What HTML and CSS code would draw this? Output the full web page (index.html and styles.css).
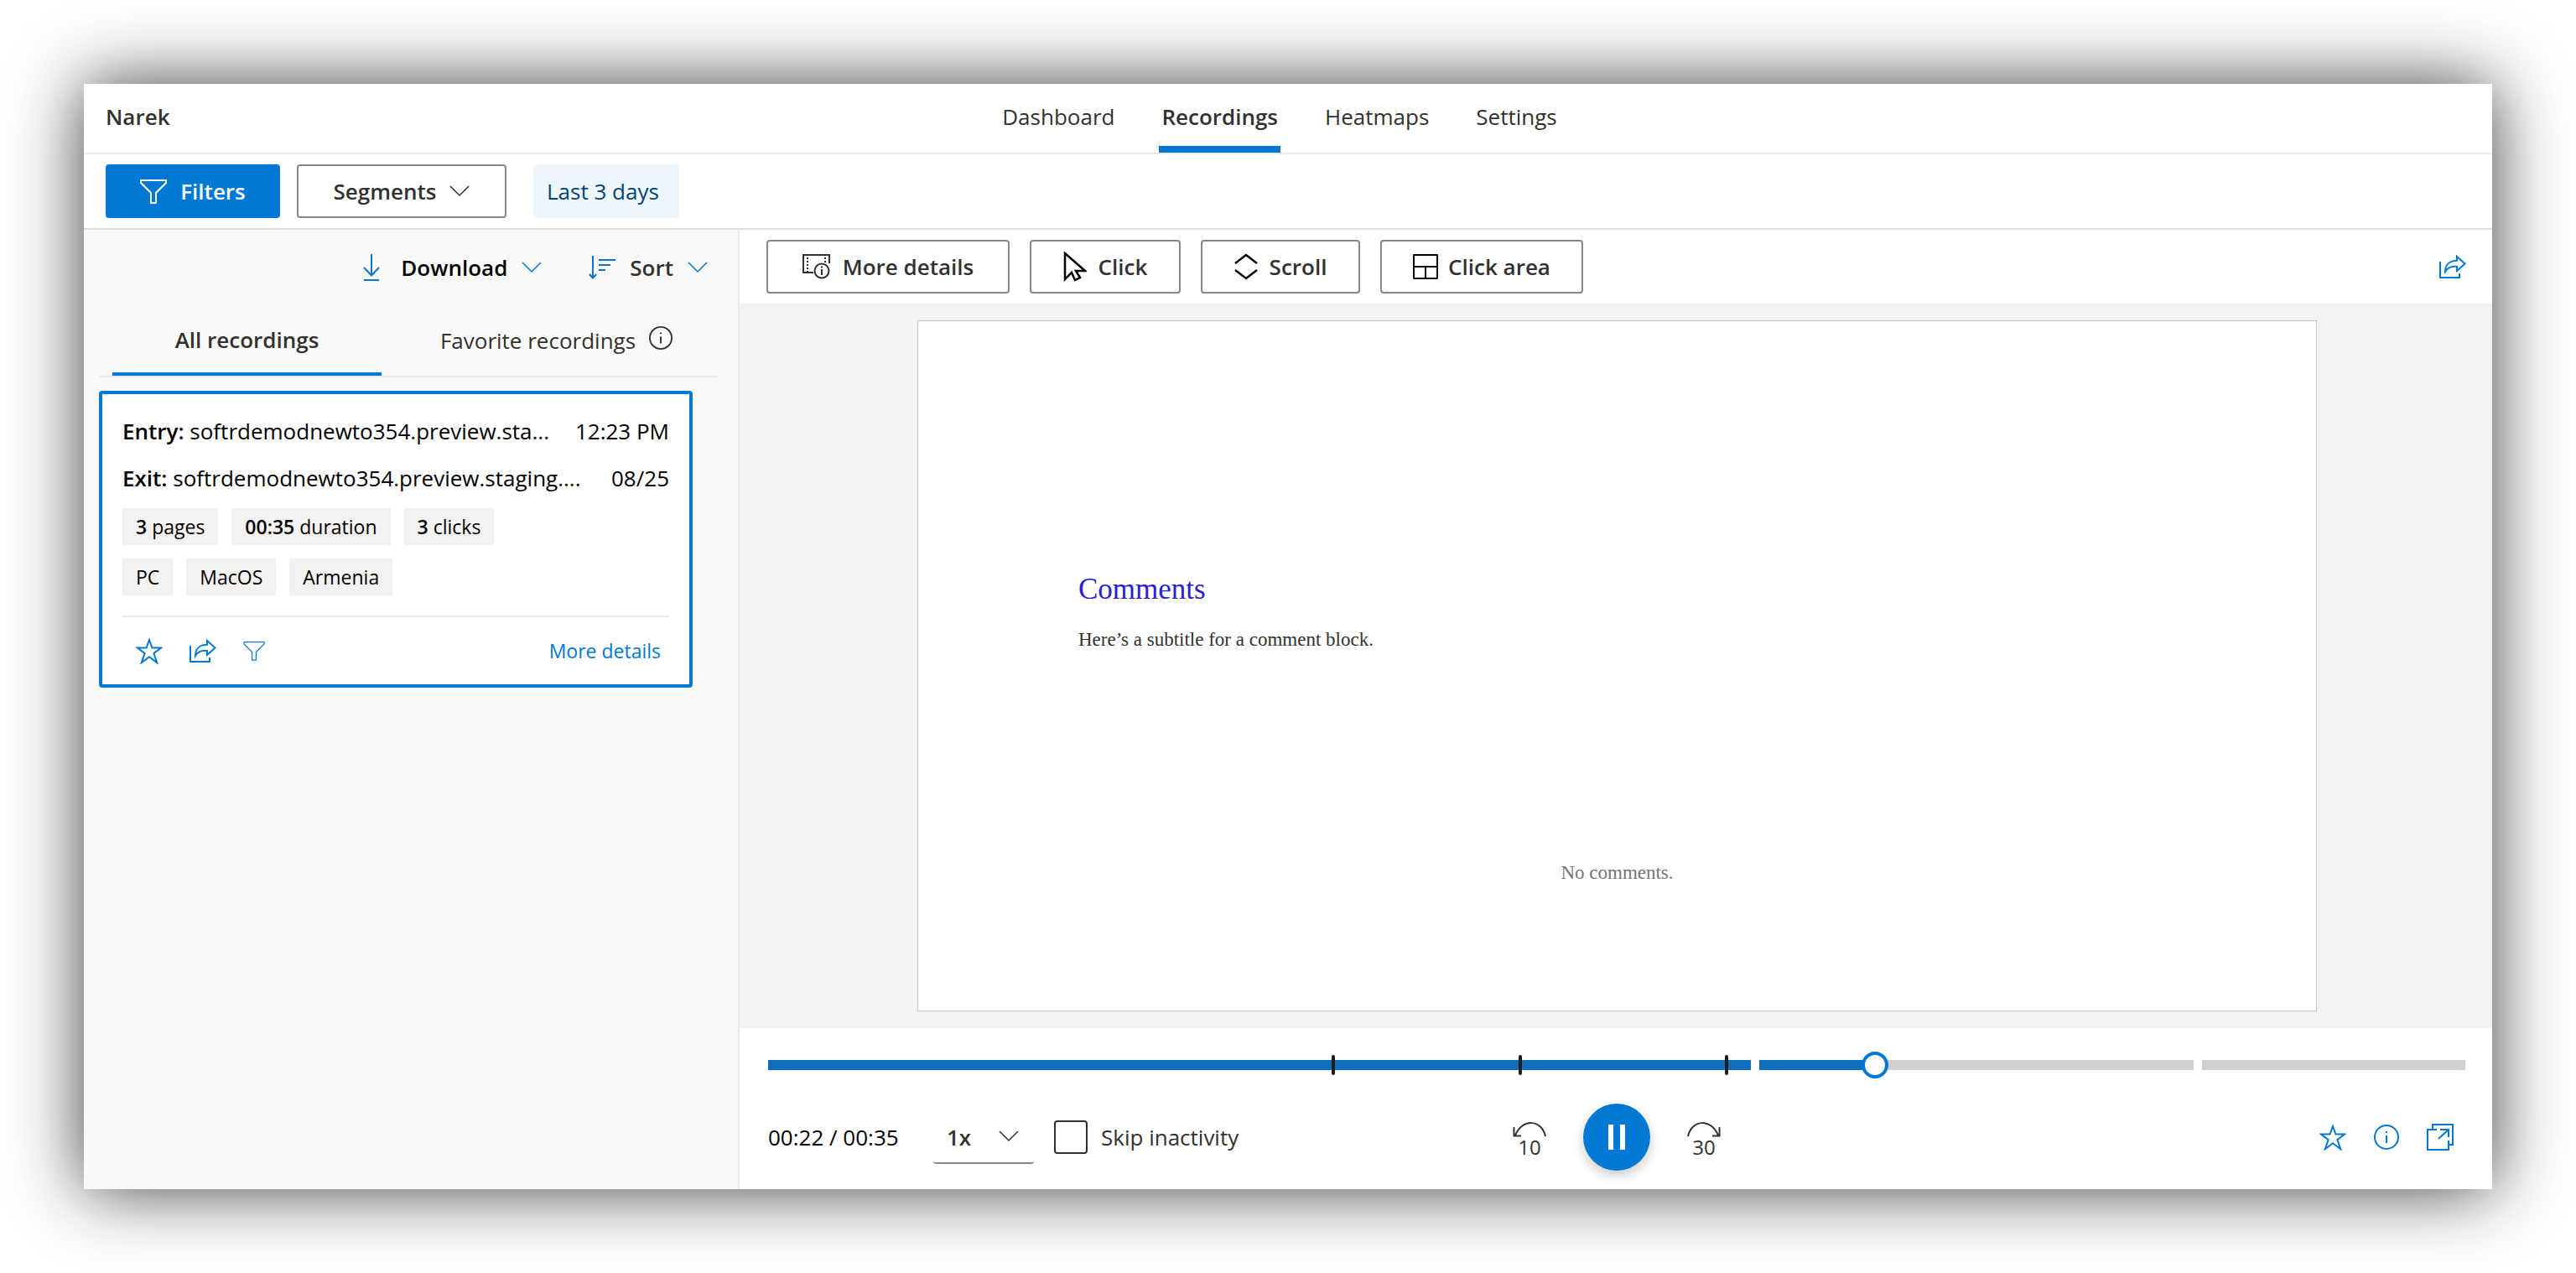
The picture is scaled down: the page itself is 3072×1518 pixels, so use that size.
FILE: index.html
```html
<!DOCTYPE html>
<html lang="en">
<head>
<meta charset="utf-8">
<title>Recordings</title>
<link rel="stylesheet" href="styles.css">
</head>
<body>
<svg class="defs" aria-hidden="true">
  <symbol id="chevron" viewBox="0 0 24 14"><path d="M1 1l11 11L23 1"/></symbol>
  <symbol id="funnel" viewBox="0 0 32 30"><path d="M1 2h30v3L19 17v12h-6V17L1 5z"/></symbol>
  <symbol id="star" viewBox="0 0 32 32"><path d="M16 3l3.400 9.600H30l-8.600 6.600 3.800 11-9.200-7-9.200 7 3.800-11L2 12.600h10.600z"/></symbol>
  <symbol id="share" viewBox="0 0 32 28"><path d="M1 8v19h23v-5M21 2l9.500 8.500L21 19v-5c-6-.8-11 1-14 6 0-8 5-13.200 14-13.200z"/></symbol>
  <symbol id="info" viewBox="0 0 30 30"><circle cx="15" cy="15" r="14"/><path d="M15 13v9M15 8v2"/></symbol>
</svg>
<div class="app">
  <header class="header">
    <div class="brand">Narek</div>
    <nav class="nav">
      <a href="#dashboard">Dashboard</a>
      <a href="#recordings" class="active" aria-current="page">Recordings</a>
      <a href="#heatmaps">Heatmaps</a>
      <a href="#settings">Settings</a>
    </nav>
  </header>

  <div class="filterbar">
    <button class="btn primary"><svg class="i-funnel"><use href="#funnel"/></svg>Filters</button>
    <button class="btn segments">Segments<svg class="i-chevron"><use href="#chevron"/></svg></button>
    <button class="btn range">Last 3 days</button>
  </div>

  <main class="main">
    <aside class="sidebar">
      <div class="side-tools">
        <button class="tool download"><svg class="i-download" viewBox="0 0 20 32"><path d="M10 0v25M1 16l9 9.500 9-9.500M1 31h18"/></svg>Download<svg class="i-chevron"><use href="#chevron"/></svg></button>
        <button class="tool"><svg class="i-sort" viewBox="0 0 32 28"><path d="M5 0v26M1 22l4 4.500L9 22M12 5h20M12 11h14M12 17h8"/></svg>Sort<svg class="i-chevron"><use href="#chevron"/></svg></button>
      </div>
      <div class="tabs" role="tablist">
        <button class="tab selected" role="tab" aria-selected="true">All recordings</button>
        <button class="tab" role="tab" aria-selected="false">Favorite recordings<svg class="i-info-small" viewBox="0 0 30 30"><use href="#info"/></svg></button>
      </div>
      <article class="card">
        <div class="visit"><span class="url"><b>Entry:</b> softrdemodnewto354.preview.sta...</span><time>12:23 PM</time></div>
        <div class="visit"><span class="url"><b>Exit:</b> softrdemodnewto354.preview.staging....</span><time>08/25</time></div>
        <ul class="chips">
          <li><b>3</b> pages</li>
          <li><b>00:35</b> duration</li>
          <li><b>3</b> clicks</li>
        </ul>
        <ul class="chips">
          <li>PC</li>
          <li>MacOS</li>
          <li>Armenia</li>
        </ul>
        <div class="card-foot">
          <button class="icon" aria-label="Add to favorites"><svg class="i-star"><use href="#star"/></svg></button>
          <button class="icon" aria-label="Share"><svg class="i-share"><use href="#share"/></svg></button>
          <button class="icon" aria-label="Filter"><svg class="i-funnel-small"><use href="#funnel"/></svg></button>
          <a href="#details">More details</a>
        </div>
      </article>
    </aside>

    <section class="viewer">
      <div class="toolbar">
        <button class="btn w-details"><svg class="i-details" viewBox="0 0 34 30"><path d="M13 22H1V1h31v10"/><path class="film" d="M6 4v17M27 4v6"/><circle cx="23" cy="20" r="8.500"/><path d="M23 18v7M23 14.500v2"/></svg>More details</button>
        <button class="btn w-click"><svg class="i-cursor" viewBox="0 0 28 36"><path d="M2 2v31l8-8 4 9 6-3-5-8h11z"/></svg>Click</button>
        <button class="btn w-scroll"><svg class="i-scroll" viewBox="0 0 28 32"><path d="M1 12L14 2l13 10M1 20l13 10 13-10"/></svg>Scroll</button>
        <button class="btn w-area"><svg class="i-area" viewBox="0 0 30 30"><path d="M1 1h28v28H1zM1 15h28M15 15v14"/></svg>Click area</button>
        <button class="icon toolbar-share" aria-label="Share"><svg class="i-share"><use href="#share"/></svg></button>
      </div>

      <div class="stage">
        <div class="page">
          <h1>Comments</h1>
          <p>Here’s a subtitle for a comment block.</p>
          <p class="empty">No comments.</p>
        </div>
      </div>

      <div class="player">
        <div class="timeline">
          <div class="seg played" style="flex-grow:1172">
            <i class="tick" style="left:57.500%"></i>
            <i class="tick" style="left:76.500%"></i>
            <i class="tick" style="left:97.500%"></i>
          </div>
          <div class="seg" style="flex-grow:518">
            <div class="fill" style="width:26.600%"></div>
            <i class="knob" style="left:26.600%"></i>
          </div>
          <div class="seg" style="flex-grow:314"></div>
        </div>
        <div class="controls">
          <div class="left">
            <span class="time">00:22 / 00:35</span>
            <div class="speed">
              <select aria-label="Playback speed"><option>1x</option></select>
              <svg class="i-chevron"><use href="#chevron"/></svg>
            </div>
            <label class="skip"><input type="checkbox">Skip inactivity</label>
          </div>
          <div class="center">
            <button class="jump" aria-label="Back 10 seconds"><svg viewBox="0 0 40 18"><path d="M39 17C35-3 11-5 3 16M1.500 6v10.500H10"/></svg><span>10</span></button>
            <button class="pause" aria-label="Pause"><svg viewBox="0 0 20 32"><path d="M0 1h6v30H0zM14 1h6v30h-6z"/></svg></button>
            <button class="jump" aria-label="Forward 30 seconds"><svg viewBox="0 0 40 18"><path d="M1 17C5-3 29-5 37 16M38.500 6v10.500H30"/></svg><span>30</span></button>
          </div>
          <div class="right">
            <button class="icon" aria-label="Add to favorites"><svg class="i-star"><use href="#star"/></svg></button>
            <button class="icon" aria-label="Information"><svg class="i-info"><use href="#info"/></svg></button>
            <button class="icon" aria-label="Open in new window"><svg class="i-popout" viewBox="0 0 32 32"><path d="M12 7H1v24h25V20M7 7V1h24v24h-5M16 7h10v9M26 7L14 18"/></svg></button>
          </div>
        </div>
      </div>
    </section>
  </main>
</div>
</body>
</html>
```
FILE: styles.css
```css
* { box-sizing: border-box; }
body {
  margin: 0;
  min-height: 100vh;
  padding: 100px;
  display: flex;
  background: #fff;
  color: #323130;
  font: 26px/36px "Open Sans", "Noto Sans", sans-serif;
}
button, select, input { font: inherit; color: inherit; margin: 0; }
button { background: none; border: 0; padding: 0; cursor: pointer; }
a { color: inherit; text-decoration: none; }
ul, h1, p { margin: 0; padding: 0; list-style: none; font-weight: 400; }
b { font-weight: 600; }
svg { fill: none; stroke: currentColor; stroke-width: 2; flex: none; display: block; }
.defs { position: absolute; width: 0; height: 0; }

.app {
  flex: 1;
  display: flex;
  flex-direction: column;
  background: #fff;
  box-shadow: 0 0 80px rgba(0, 0, 0, .76);
}

.header {
  display: grid;
  grid-template-columns: 1fr auto 1fr;
  height: 84px;
  padding: 0 26px;
  border-bottom: 2px solid #edebe9;
}
.brand { font-weight: 600; line-height: 78px; }
.nav { display: flex; gap: 50px; margin-right: 20px; }
.nav a { padding: 0 3px; line-height: 78px; border-bottom: 8px solid transparent; height: 82px; }
.nav .active { font-weight: 600; border-color: #0078d4; }

.filterbar {
  display: flex;
  align-items: center;
  gap: 20px;
  height: 90px;
  padding: 0 26px;
  border-bottom: 2px solid #dedede;
}
.btn {
  display: flex;
  align-items: center;
  justify-content: center;
  height: 64px;
  border: 2px solid #8a8886;
  border-radius: 4px;
  font-weight: 600;
  white-space: nowrap;
}
.primary { width: 208px; gap: 16px; background: #0078d4; border-color: #0078d4; color: #fff; }
.segments { width: 250px; gap: 16px; }
.range { margin-left: 12px; padding: 0 24px 0 16px; background: #eff6fc; border: 0; color: #004578; font-weight: 400; }

.i-funnel { width: 32px; height: 30px; }
.i-funnel-small { width: 26px; height: 24px; stroke-width: 1.5px; }
.i-chevron { width: 24px; height: 14px; stroke-width: 1.5px; }
.i-download { width: 20px; height: 32px; }
.i-sort { width: 32px; height: 28px; }
.i-info-small { width: 28px; height: 28px; margin-bottom: 6px; }
.i-info { width: 32px; height: 30px; }
.i-star, .i-popout { width: 32px; height: 32px; }
.i-share { width: 32px; height: 28px; }
.i-details { width: 34px; height: 30px; }
.film { stroke-dasharray: 2 2; }
.i-cursor { width: 28px; height: 36px; stroke-width: 2.5px; }
.i-scroll { width: 28px; height: 32px; stroke-width: 2.5px; }
.i-area { width: 30px; height: 30px; stroke-linejoin: round; }
.i-cursor, .i-scroll, .i-area { stroke: #000; }

.main { flex: 1; display: grid; grid-template-columns: 782px minmax(0, 1fr); }

.sidebar { background: #faf9f8; border-right: 2px solid #edebe9; padding: 0 24px 0 18px; }
.side-tools { display: flex; justify-content: flex-end; gap: 56px; height: 90px; padding-right: 12px; }
.tool { display: flex; align-items: center; gap: 17px; font-weight: 600; }
.tool svg { stroke: #0078d4; }
.download { color: #000; }
.download .i-download { margin-right: 8px; }
.tabs { display: flex; gap: 24px; height: 86px; padding: 0 16px; border-bottom: 2px solid #edebe9; }
.tab { display: flex; align-items: center; justify-content: center; gap: 16px; flex: none; height: 84px; border-bottom: 4px solid transparent; border-top: 2px solid transparent; }
.tab.selected { width: 321px; font-weight: 600; border-bottom-color: #0078d4; }
.tab:last-child { flex: 1; padding: 2px 0 0 8px; }

.card {
  margin: 16px 30px 0 0;
  padding: 16px 24px 0;
  height: 354px;
  background: #fff;
  border: 4px solid #0078d4;
  border-radius: 4px;
  color: #000;
}
.visit { display: flex; justify-content: space-between; line-height: 56px; white-space: nowrap; }
.chips { display: flex; gap: 16px; margin: 8px 0 16px; font-size: 23px; line-height: 44px; }
.chips li { padding: 0 16px; background: #f3f2f1; }
.card-foot { display: flex; align-items: center; gap: 32px; margin-top: 24px; padding: 0 10px 2px 16px; height: 84px; border-top: 2px solid #edebe9; color: #0078d4; }
.card-foot a { margin-left: auto; font-size: 23px; }
.icon { color: #0078d4; }

.viewer { display: flex; flex-direction: column; }
.toolbar { display: flex; align-items: center; gap: 24px; height: 88px; padding: 0 31px 0 32px; }
.toolbar .btn { gap: 14px; }
.toolbar .w-area { gap: 12px; }
.w-details { width: 290px; }
.w-click { width: 180px; }
.w-scroll { width: 190px; }
.w-area { width: 242px; }
.toolbar-share { margin-left: auto; }
.stage { flex: 1; display: flex; padding: 20px 209px 20px 212px; background: #f3f2f1; }
.page { flex: 1; padding: 300px 191px 0; background: #fff; border: 1px solid #c8c6c4; color: #323130; font-family: "Liberation Serif", serif; font-size: 23px; }
.page h1 { margin-bottom: 22px; color: #2b1fd1; font-size: 35px; line-height: 40px; }
.page .empty { margin-top: 242px; text-align: center; color: #757575; }

.player { height: 192px; padding: 38px 32px 0 34px; }
.timeline { display: flex; gap: 10px; height: 12px; }
.seg { position: relative; flex: 1 1 0; background: #d2d0ce; }
.seg.played, .fill { background: #106ebe; }
.fill { height: 100%; }
.tick { position: absolute; top: -6px; width: 4px; height: 24px; margin-left: -2px; border-radius: 2px; background: #201f1e; }
.knob { position: absolute; top: -10px; width: 32px; height: 32px; margin-left: -16px; border: 4px solid #0078d4; border-radius: 50%; background: #fff; }

.controls { display: grid; grid-template-columns: 1fr auto 1fr; align-items: center; height: 80px; margin-top: 40px; }
.left, .center, .right { display: flex; align-items: center; }
.time { width: 197px; color: #000; }
.speed { position: relative; width: 120px; height: 64px; border-bottom: 2px solid #8a8886; border-radius: 4px; }
.speed select { appearance: none; width: 100%; height: 64px; padding: 0 16px; border: 0; background: none; font-weight: 600; }
.speed svg { position: absolute; right: 18px; top: 24px; pointer-events: none; }
.skip { display: flex; align-items: center; gap: 16px; margin-left: 24px; }
.skip input { appearance: none; width: 40px; height: 40px; border: 2px solid #323130; border-radius: 4px; }
.center { gap: 44px; }
.jump { display: flex; flex-direction: column; align-items: center; gap: 2px; padding-top: 4px; font-size: 24px; line-height: 20px; }
.jump svg { width: 40px; height: 18px; }
.pause { display: grid; place-items: center; width: 80px; height: 80px; border-radius: 50%; background: #0078d4; box-shadow: 0 6px 14px rgba(0, 0, 0, .2); }
.pause svg { width: 20px; height: 32px; fill: #fff; stroke: none; }
.right { justify-content: flex-end; gap: 32px; padding-right: 14px; }
```
